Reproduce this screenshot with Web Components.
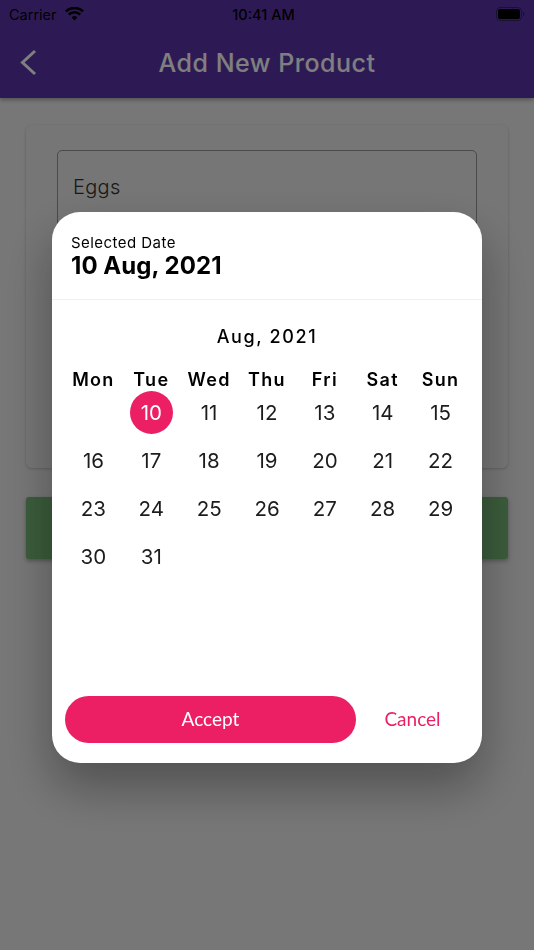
<!DOCTYPE html>
<html>
<head>
<meta charset="utf-8">
<style>
  html, body { margin: 0; padding: 0; }
  body { width: 534px; height: 950px; overflow: hidden; font-family: "Inter", "Liberation Sans", sans-serif; }
</style>
</head>
<body>
<product-page></product-page>
<date-dialog selected="10 Aug, 2021" month="Aug, 2021" first="10" last="31" offset="1"></date-dialog>

<script>
(function () {
    let statusTmpl = document.createElement("template");
    statusTmpl.innerHTML = `
      <style>
          :host { display: grid; grid-template-columns: 1fr auto 1fr; align-items: center; height: 28px; padding: 0 9px 0 9px; color: #000; font-size: 14.5px; }
          .left { display: flex; align-items: center; gap: 8px; }
          .right { display: flex; justify-content: flex-end; }
          .time { font-weight: 500; font-size: 14.5px; margin-right: 7px; }
          svg { display: block; }
      </style>
      <div class="left">
        <span>Carrier</span>
        <svg width="19" height="14" viewBox="0 0 19 14"><path d="M9.5 13.6 6.6 10.5a4.2 4.2 0 0 1 5.8 0zM4.7 8.5 2.9 6.6a9.6 9.6 0 0 1 13.2 0l-1.8 1.9a7 7 0 0 0-9.6 0zM1.7 5.3 0 3.5a13.8 13.8 0 0 1 19 0l-1.7 1.8a11.4 11.4 0 0 0-15.6 0z" fill="#000"/></svg>
      </div>
      <div class="time">10:41 AM</div>
      <div class="right">
        <svg width="29" height="14" viewBox="0 0 29 14"><rect x="0.5" y="0.5" width="25" height="13" rx="3.5" fill="none" stroke="#000" stroke-opacity=".4"/><rect x="2" y="2" width="22" height="10" rx="2" fill="#000"/><path d="M27 4.8c.9.3 1.5 1.1 1.5 2.2s-.6 1.9-1.5 2.2z" fill="#000" fill-opacity=".4"/></svg>
      </div>
    `;

    class StatusBar extends HTMLElement {
        constructor() {
            super();
            this.attachShadow({ mode: "open" }).appendChild(statusTmpl.content.cloneNode(true));
        }
    }
    customElements.define("status-bar", StatusBar);

    let headerTmpl = document.createElement("template");
    headerTmpl.innerHTML = `
      <style>
          :host { display: block; background: #5b35ab; box-shadow: 0 2px 4px rgba(0,0,0,.3); position: relative; }
          .bar { display: flex; align-items: center; justify-content: center; height: 70px; position: relative; }
          .title { color: #fff; font-size: 25px; font-weight: 500; letter-spacing: .5px; margin-top: -1px; }
          svg { position: absolute; left: 20px; top: 21px; }
      </style>
      <status-bar></status-bar>
      <div class="bar">
        <svg width="17" height="27" viewBox="0 0 17 27"><path d="M15 2 2.5 13.5 15 25" fill="none" stroke="#fff" stroke-width="3"/></svg>
        <div class="title"><slot></slot></div>
      </div>
    `;

    class AppHeader extends HTMLElement {
        constructor() {
            super();
            this.attachShadow({ mode: "open" }).appendChild(headerTmpl.content.cloneNode(true));
        }
    }
    customElements.define("app-header", AppHeader);

    let pageTmpl = document.createElement("template");
    pageTmpl.innerHTML = `
      <style>
          :host { display: block; height: 950px; background: #eee; }
          main { padding: 27px 26px 0; display: flex; flex-direction: column; gap: 29px; }
          .card { height: 343px; box-sizing: border-box; padding: 25px 31px 0; background: #ececec; border-radius: 6px; box-shadow: 0 1px 3px rgba(0,0,0,.2); }
          .field { height: 110px; box-sizing: border-box; border: 1.5px solid #949494; border-radius: 5px; padding: 24px 15px; font-size: 20px; line-height: 24px; color: #333; font-weight: 300; letter-spacing: .3px; }
          .save { height: 62px; background: #78b878; border-radius: 3px; box-shadow: 0 2px 4px rgba(0,0,0,.3); }
      </style>
      <app-header>Add New Product</app-header>
      <main>
        <div class="card"><div class="field">Eggs</div></div>
        <div class="save"></div>
      </main>
    `;

    class ProductPage extends HTMLElement {
        constructor() {
            super();
            this.attachShadow({ mode: "open" }).appendChild(pageTmpl.content.cloneNode(true));
        }
    }
    customElements.define("product-page", ProductPage);

    let calTmpl = document.createElement("template");
    calTmpl.innerHTML = `
      <style>
          :host { display: block; padding: 0 12.5px; color: #000; }
          .month { text-align: center; font-size: 18px; font-weight: 500; letter-spacing: 1.6px; line-height: 22px; padding-top: 26px; }
          .head, .days { display: grid; grid-template-columns: repeat(7, 1fr); justify-items: center; }
          .head { margin-top: 21px; font-size: 18px; font-weight: 600; letter-spacing: 1.3px; line-height: 22px; }
          .days { grid-auto-rows: 48px; align-items: center; margin-top: -3px; font-size: 20.5px; font-weight: 400; color: #1c1c1c; }
          .active { width: 43px; height: 43px; border-radius: 50%; background: #ec1f65; color: #fff; display: flex; align-items: center; justify-content: center; }
      </style>
      <div class="month"></div>
      <div class="head"></div>
      <div class="days"></div>
    `;

    class CalendarGrid extends HTMLElement {
        constructor() {
            super();
            this._shadowRoot = this.attachShadow({ mode: "open" });
            this._shadowRoot.appendChild(calTmpl.content.cloneNode(true));
        }

        render(month, first, last, offset) {
            this._shadowRoot.querySelector(".month").textContent = month;
            let head = this._shadowRoot.querySelector(".head");
            for (let name of ["Mon", "Tue", "Wed", "Thu", "Fri", "Sat", "Sun"]) {
                let el = document.createElement("div");
                el.textContent = name;
                head.appendChild(el);
            }
            let days = this._shadowRoot.querySelector(".days");
            for (let i = 0; i < offset; i++) {
                days.appendChild(document.createElement("div"));
            }
            for (let d = first; d <= last; d++) {
                let el = document.createElement("div");
                el.textContent = d;
                if (d == first) el.className = "active";
                days.appendChild(el);
            }
        }
    }
    customElements.define("calendar-grid", CalendarGrid);

    let dialogTmpl = document.createElement("template");
    dialogTmpl.innerHTML = `
      <style>
          :host { display: block; position: fixed; inset: 0; background: rgba(0,0,0,.5); }
          .box { position: absolute; left: 52px; top: 212px; width: 430px; height: 551px; background: #fff; border-radius: 28px; box-shadow: 0 24px 48px rgba(0,0,0,.32); display: flex; flex-direction: column; }
          header { height: 88px; box-sizing: border-box; padding: 22px 19px 0; border-bottom: 1px solid #f0f0f0; color: #000; }
          .label { font-size: 15px; line-height: 18px; letter-spacing: .45px; }
          .value { font-size: 24px; line-height: 28px; font-weight: 700; letter-spacing: .05px; }
          calendar-grid { flex: 1; }
          footer { display: flex; align-items: center; padding: 0 0 20px 13px; font-family: "Lato", sans-serif; font-size: 19px; line-height: 22px; }
          .accept { width: 291px; height: 47px; padding-bottom: 2px; box-sizing: border-box; border-radius: 24px; background: #ec1f65; color: #fff; display: flex; align-items: center; justify-content: center; }
          .cancel { flex: 1; text-align: center; color: #ec1f65; padding: 0 13px 2px 0; }
      </style>
      <div class="box">
        <header>
          <div class="label">Selected Date</div>
          <div class="value"></div>
        </header>
        <calendar-grid></calendar-grid>
        <footer>
          <div class="accept">Accept</div>
          <div class="cancel">Cancel</div>
        </footer>
      </div>
    `;

    class DateDialog extends HTMLElement {
        constructor() {
            super();
            this._shadowRoot = this.attachShadow({ mode: "open" });
            this._shadowRoot.appendChild(dialogTmpl.content.cloneNode(true));
        }

        connectedCallback() {
            this._shadowRoot.querySelector(".value").textContent = this.getAttribute("selected");
            this._shadowRoot.querySelector("calendar-grid").render(
                this.getAttribute("month"),
                Number(this.getAttribute("first")),
                Number(this.getAttribute("last")),
                Number(this.getAttribute("offset"))
            );
        }
    }
    customElements.define("date-dialog", DateDialog);
})();
</script>
</body>
</html>
